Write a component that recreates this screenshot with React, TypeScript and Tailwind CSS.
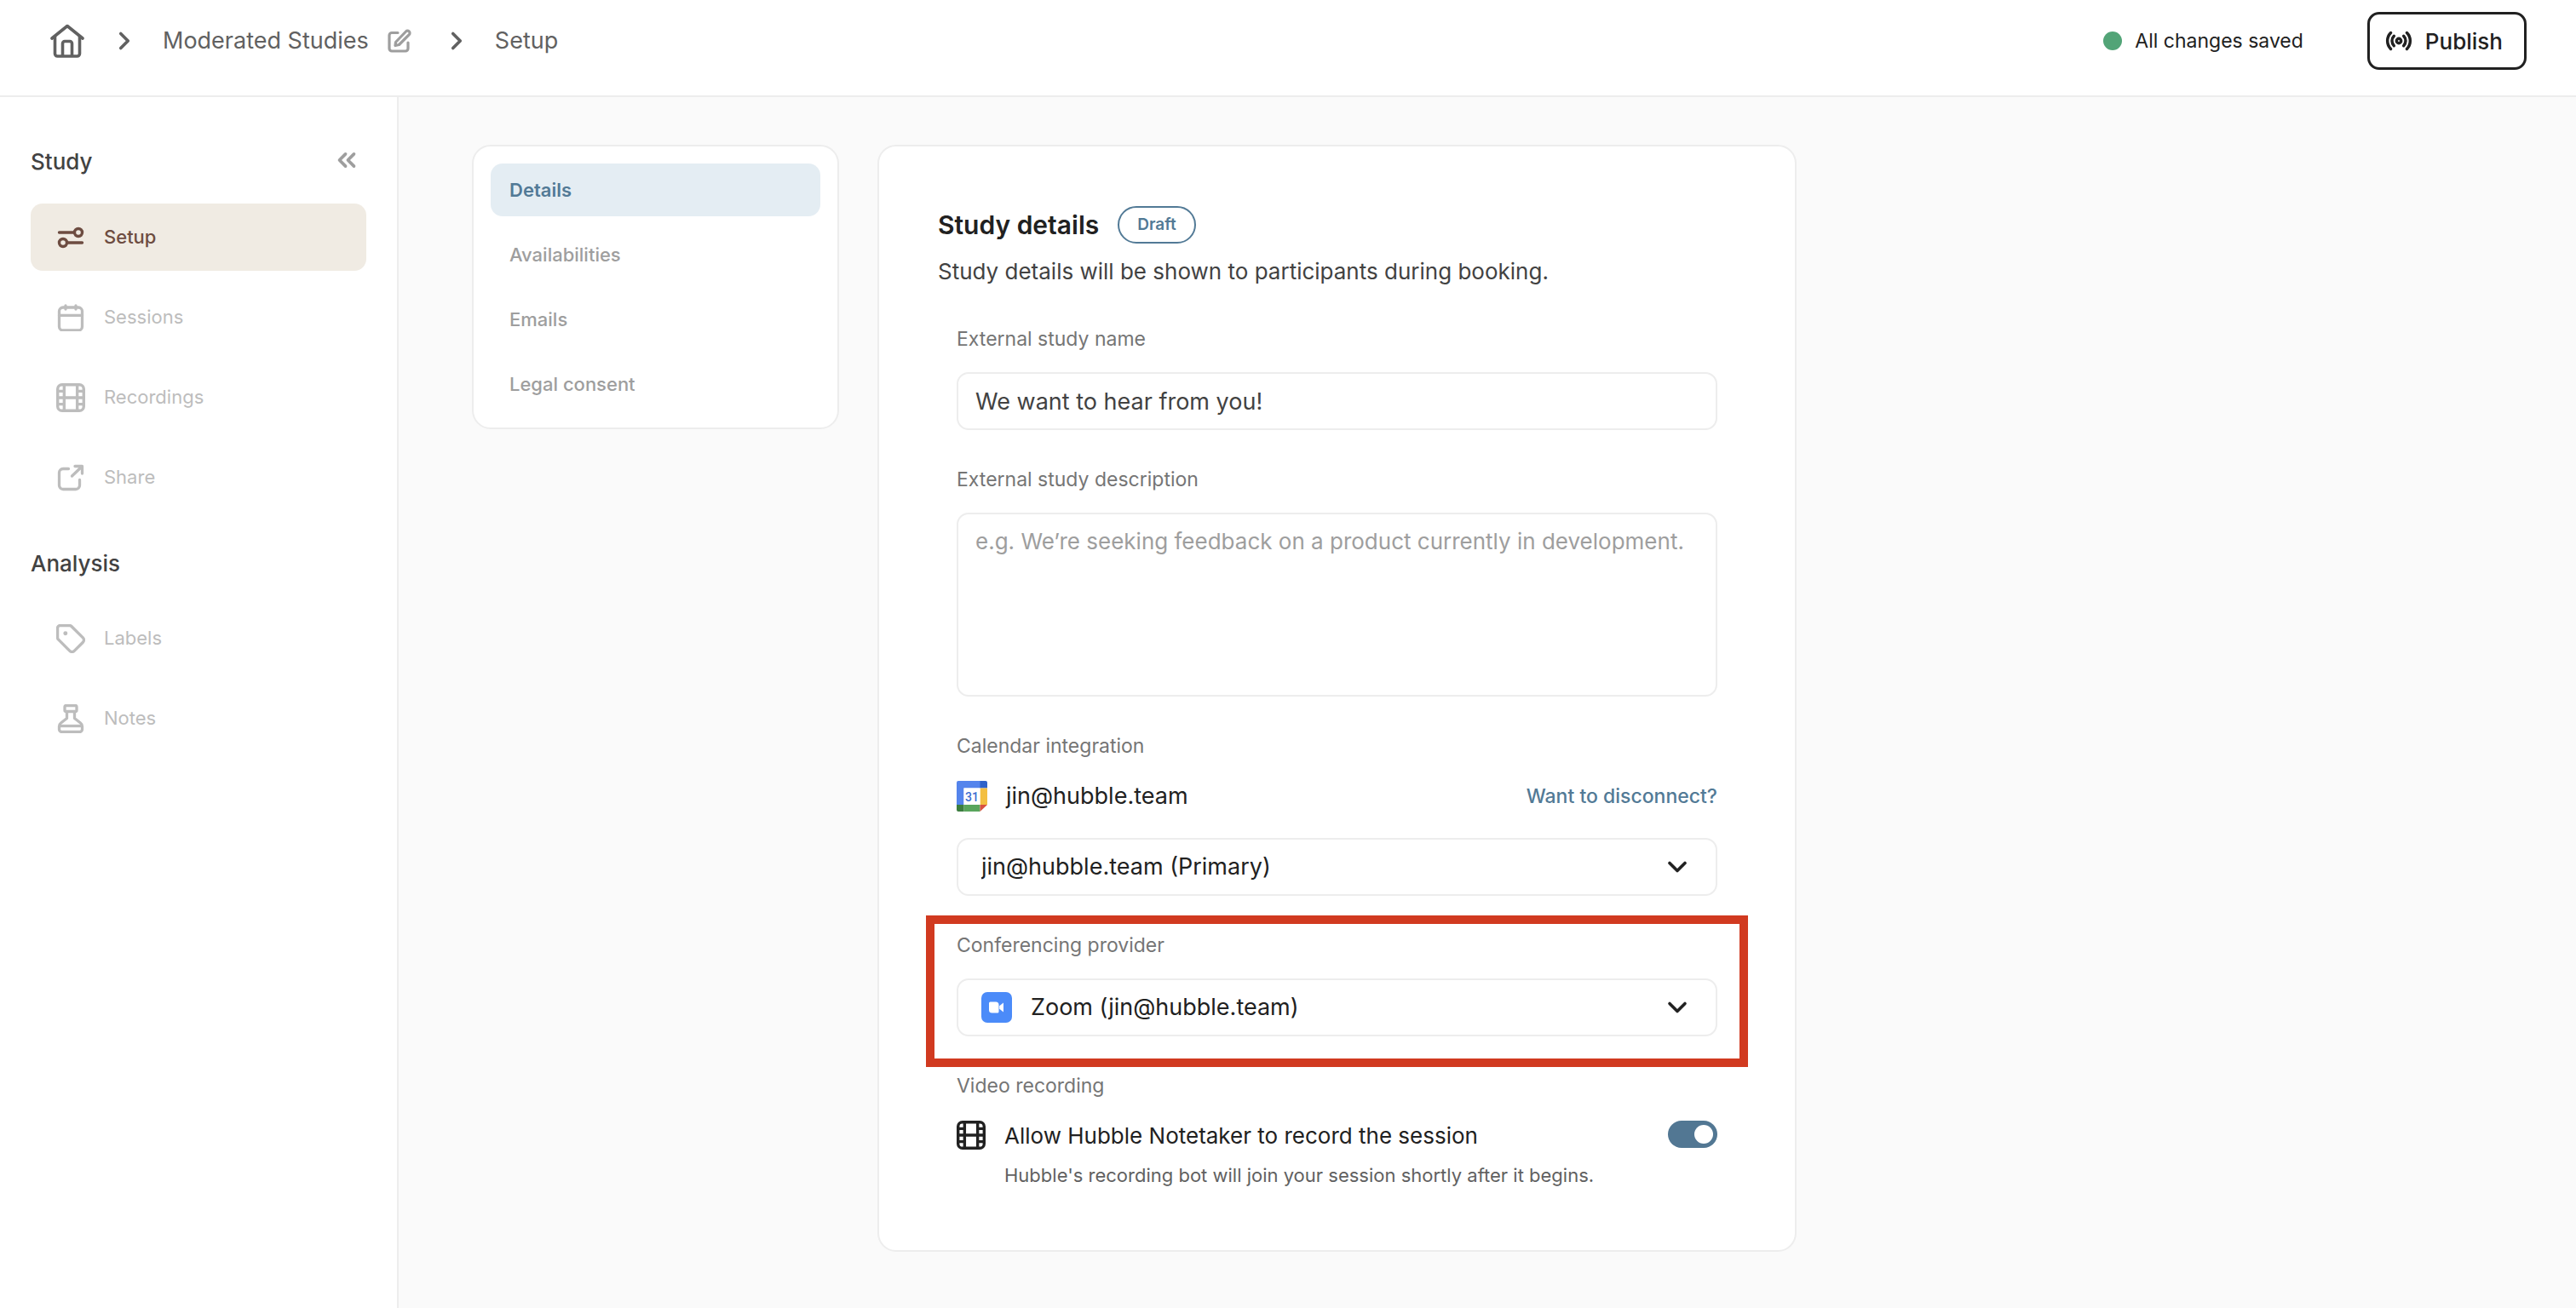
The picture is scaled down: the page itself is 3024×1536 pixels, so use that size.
import { useState } from 'react';
import type { ReactNode } from 'react';
import { ChevronDown, ChevronRight, ChevronsLeft, Radio } from 'lucide-react';

type IconProps = { className?: string };

const HomeIcon = ({ className }: IconProps) => (
  <svg viewBox="0 0 40 40" fill="none" stroke="currentColor" strokeWidth="3.6" strokeLinecap="round" strokeLinejoin="round" className={className}>
    <path d="M2 17 20 2.500 38 17" />
    <path d="M5.500 15v20a3 3 0 0 0 3 3h23a3 3 0 0 0 3-3V15" />
    <path d="M14.500 37V23a2.500 2.500 0 0 1 2.500-2.500h6a2.500 2.500 0 0 1 2.500 2.500v14" />
  </svg>
);

const EditIcon = ({ className }: IconProps) => (
  <svg viewBox="0 0 28 28" fill="none" stroke="currentColor" strokeWidth="3.2" strokeLinecap="round" strokeLinejoin="round" className={className}>
    <path d="M12 4.500H5A3 3 0 0 0 2 7.500V23a3 3 0 0 0 3 3h16a3 3 0 0 0 3-3v-7" />
    <path d="M9.500 15.500 21.500 3a2.600 2.600 0 0 1 3.800 3.600L13.500 18.500l-4.500 1z" />
  </svg>
);

const SlidersIcon = ({ className }: IconProps) => (
  <svg viewBox="0 0 32 32" fill="none" stroke="currentColor" strokeWidth="3.400" strokeLinecap="round" className={className}>
    <path d="M2.500 10H20M12 22h17.500" />
    <circle cx="25" cy="10" r="4.500" />
    <circle cx="7" cy="22" r="4.500" />
  </svg>
);

const CalendarIcon = ({ className }: IconProps) => (
  <svg viewBox="1.333 1.333 21.333 21.333" fill="none" stroke="currentColor" strokeWidth="2.200" strokeLinecap="round" strokeLinejoin="round" className={className}>
    <rect x="3" y="4" width="18" height="18" rx="3" />
    <path d="M3 10.200h18M8 2.600v2.800M16 2.600v2.800" />
  </svg>
);

const FilmIcon = ({ className }: IconProps) => (
  <svg viewBox="2 2 20 20" fill="none" stroke="currentColor" strokeWidth="2" className={className}>
    <rect x="3" y="3" width="18" height="18" rx="3" />
    <path d="M7.500 3v18M16.500 3v18M3 12h18M3 7.500h4.500M3 16.500h4.500M16.500 7.500H21M16.500 16.500H21" />
  </svg>
);

const ShareIcon = ({ className }: IconProps) => (
  <svg viewBox="0 0 32 32" fill="none" stroke="currentColor" strokeWidth="3.300" strokeLinecap="round" strokeLinejoin="round" className={className}>
    <path d="M13.500 5.500H7a4.500 4.500 0 0 0-4.500 4.500v15A4.500 4.500 0 0 0 7 29.500h15a4.500 4.500 0 0 0 4.500-4.500v-6.500" />
    <path d="M17.500 14 29 3M21 2.500h8.500V11" />
  </svg>
);

const TagIcon = ({ className }: IconProps) => (
  <svg viewBox="1 1 22 22" fill="none" stroke="currentColor" strokeWidth="2.200" strokeLinecap="round" strokeLinejoin="round" className={className}>
    <path d="M12.586 2.586A2 2 0 0 0 11.172 2H4a2 2 0 0 0-2 2v7.172a2 2 0 0 0 .586 1.414l8.704 8.704a2.426 2.426 0 0 0 3.420 0l6.580-6.580a2.426 2.426 0 0 0 0-3.420z" />
    <circle cx="8" cy="8" r="1.600" fill="currentColor" stroke="none" />
  </svg>
);

const FlaskIcon = ({ className }: IconProps) => (
  <svg viewBox="0 0 34 34" fill="none" stroke="currentColor" strokeWidth="3.300" strokeLinejoin="round" className={className}>
    <rect x="10" y="1.500" width="14" height="7" rx="1.500" />
    <path d="M12.500 8.500v8L5.500 22a5 5 0 0 0-2 4v3.500a3 3 0 0 0 3 3h21a3 3 0 0 0 3-3V26a5 5 0 0 0-2-4l-7-5.500v-8" />
    <path d="M3.500 25.500h27" />
  </svg>
);

const GoogleCalendarIcon = ({ className }: IconProps) => (
  <svg viewBox="0 0 36 36" className={className}>
    <path d="M2 0h26v8.500H8.500V28H0V2a2 2 0 0 1 2-2z" fill="#5484ec" />
    <path d="M27.500 0H34a2 2 0 0 1 2 2v6.500h-8.500z" fill="#2f62c9" />
    <path d="M27.500 8.500H36V28h-8.500z" fill="#f3bf42" />
    <path d="M8.500 28h19v8h-19z" fill="#58a55c" />
    <path d="M0 28h8.500v8H2a2 2 0 0 1-2-2z" fill="#3b7d3f" />
    <path d="M27.500 28H36l-8.500 8z" fill="#d85140" />
    <path d="M8.500 8.500h19V28h-19z" fill="#fff" />
    <text x="18" y="23.500" textAnchor="middle" fontSize="14" fill="#3c6dd0" fontWeight="500" fontFamily="Roboto, sans-serif">31</text>
  </svg>
);

const ZoomIcon = ({ className }: IconProps) => (
  <svg viewBox="0 0 36 36" className={className}>
    <rect width="36" height="36" rx="7" fill="#4b8bf9" />
    <path d="M9 13a1.500 1.500 0 0 1 1.500-1.500H17a3.500 3.500 0 0 1 3.500 3.500v8a1.500 1.500 0 0 1-1.500 1.500h-6.500A3.500 3.500 0 0 1 9 21z" fill="#fff" />
    <path d="m21.200 16.200 4.800-3.700v11l-4.800-3.700z" fill="#fff" />
  </svg>
);

type NavItem = { label: string; icon: ReactNode; active?: boolean };

const studyItems: NavItem[] = [
  { label: 'Setup', icon: <SlidersIcon className="size-8" />, active: true },
  { label: 'Sessions', icon: <CalendarIcon className="size-8" /> },
  { label: 'Recordings', icon: <FilmIcon className="size-[34px]" /> },
  { label: 'Share', icon: <ShareIcon className="size-8" /> },
];

const analysisItems: NavItem[] = [
  { label: 'Labels', icon: <TagIcon className="size-[34px]" /> },
  { label: 'Notes', icon: <FlaskIcon className="size-[34px]" /> },
];

const steps = ['Details', 'Availabilities', 'Emails', 'Legal consent'];

const NavList = ({ items }: { items: NavItem[] }) => (
  <ul className="flex flex-col gap-[15px]">
    {items.map((item) => (
      <li key={item.label}>
        <a
          href="#"
          className={`flex h-[79px] items-center gap-[22px] rounded-[14px] px-[30px] text-[22px] ${
            item.active ? 'bg-[#f0ebe3] font-medium text-[#6d4c41]' : 'text-[#bdbdbd]'
          }`}
        >
          <span className="flex w-[34px] justify-center">{item.icon}</span>
          {item.label}
        </a>
      </li>
    ))}
  </ul>
);

type SelectBoxProps = { id: string; value: string; icon?: ReactNode };

const SelectBox = ({ id, value, icon }: SelectBoxProps) => (
  <div className="flex h-[68px] items-center gap-[22px] rounded-[14px] border-2 border-[#ededed] px-[27px]">
    {icon}
    <select id={id} className="h-full min-w-0 flex-1 appearance-none bg-transparent text-[27px] text-[#212121] outline-none">
      <option>{value}</option>
    </select>
    <ChevronDown className="size-9 text-[#212121]" strokeWidth={2.4} />
  </div>
);

const labelClass = 'block text-[23px] leading-[30px] text-[#757575]';

export default function App() {
  const [name, setName] = useState('We want to hear from you!');
  const [description, setDescription] = useState('');
  const [record, setRecord] = useState(true);

  return (
    <div className="flex min-h-screen flex-col bg-white font-['Inter',sans-serif]">
      <header className="flex items-start justify-between border-b-2 border-[#ededed] pt-3.5 pr-[58px] pb-[30px] pl-[59px]">
        <nav className="flex h-[68px] items-center text-[27px] text-[#616161]">
          <a href="#" aria-label="Home">
            <HomeIcon className="size-10" />
          </a>
          <ChevronRight className="ml-[30px] size-[34px]" strokeWidth={2.6} />
          <a href="#" className="ml-[28px]">Moderated Studies</a>
          <button type="button" aria-label="Rename" className="ml-[22px] text-[#9e9e9e]">
            <EditIcon className="size-7" />
          </button>
          <ChevronRight className="ml-9 size-[34px]" strokeWidth={2.6} />
          <span className="ml-[28px]">Setup</span>
        </nav>

        <div className="flex items-center gap-[75px] text-[#212121]">
          <p className="flex items-center gap-[15px] text-[23px]">
            <span className="size-[22px] rounded-full bg-[#52a477]" />
            All changes saved
          </p>
          <button type="button" className="flex h-[68px] items-center gap-[15px] rounded-[14px] border-[3px] border-[#212121] pr-[25px] pl-[18px] text-[26px] font-medium">
            <Radio className="size-8" strokeWidth={2.6} />
            Publish
          </button>
        </div>
      </header>

      <div className="flex flex-1">
        <aside className="w-[468px] shrink-0 border-r-2 border-[#ededed] px-9 pt-[58px]">
          <div className="mb-[31px] flex h-9 items-center justify-between">
            <h2 className="text-[26px] leading-9 font-medium text-[#424242]">Study</h2>
            <button type="button" aria-label="Collapse sidebar" className="mr-[6px] mb-1 text-[#9e9e9e]">
              <ChevronsLeft className="size-[34px]" strokeWidth={2.6} />
            </button>
          </div>
          <NavList items={studyItems} />
          <h2 className="mt-[44px] mb-[30px] text-[26px] leading-9 font-medium text-[#424242]">Analysis</h2>
          <NavList items={analysisItems} />
        </aside>

        <main className="flex flex-1 items-start gap-[45px] bg-[#fafafa] px-[86px] pt-14 pb-16">
          <nav className="w-[431px] shrink-0 rounded-[22px] border-2 border-[#ededed] bg-white p-5">
            <ul className="flex flex-col gap-[14px]">
              {steps.map((step, i) => (
                <li key={step}>
                  <a
                    href="#"
                    className={`flex h-[62px] items-center rounded-[14px] px-[22px] text-[22px] ${
                      i === 0 ? 'bg-[#e4edf3] font-semibold text-[#527a96]' : 'font-medium text-[#9e9e9e]'
                    }`}
                  >
                    {step}
                  </a>
                </li>
              ))}
            </ul>
          </nav>

          <section className="max-w-[1079px] flex-1 rounded-[22px] border-2 border-[#ededed] bg-white px-[69px] pt-[70px] pb-[73px]">
            <div className="flex h-11 items-center gap-[22px]">
              <h1 className="text-[30px] leading-10 font-semibold text-[#212121]">Study details</h1>
              <span className="flex h-11 items-center rounded-full border-2 border-[#527a96] px-[21px] text-[19px] font-semibold text-[#527a96]">Draft</span>
            </div>
            <p className="mt-4 text-[26px] leading-[34px] text-[#424242]">
              Study details will be shown to participants during booking.
            </p>

            <form className="mt-[47px] flex flex-col gap-[43px] px-[22px]">
              <div>
                <label htmlFor="study-name" className={labelClass}>External study name</label>
                <input
                  id="study-name"
                  value={name}
                  onChange={(e) => setName(e.target.value)}
                  className="mt-6 block h-[68px] w-full rounded-[14px] border-2 border-[#ededed] px-5 text-[27px] text-[#424242] outline-none"
                />
              </div>

              <div>
                <label htmlFor="study-description" className={labelClass}>External study description</label>
                <textarea
                  id="study-description"
                  value={description}
                  onChange={(e) => setDescription(e.target.value)}
                  placeholder="e.g. We’re seeking feedback on a product currently in development."
                  className="mt-6 block h-[216px] w-full resize-none rounded-[14px] border-2 border-[#ededed] px-5 py-[15px] text-[26px] leading-[34px] text-[#424242] outline-none placeholder:text-[#9e9e9e]"
                />
              </div>

              <div>
                <label htmlFor="calendar" className={labelClass}>Calendar integration</label>
                <div className="mt-6 mb-[29px] flex h-10 items-center gap-[22px]">
                  <GoogleCalendarIcon className="size-9" />
                  <span className="text-[27px] text-[#212121]">jin@hubble.team</span>
                  <a href="#" className="ml-auto text-[23px] font-medium text-[#527a96]">Want to disconnect?</a>
                </div>
                <SelectBox id="calendar" value="jin@hubble.team (Primary)" />
              </div>

              <div className="relative">
                <label htmlFor="provider" className={`${labelClass} mb-6`}>Conferencing provider</label>
                <SelectBox id="provider" value="Zoom (jin@hubble.team)" icon={<ZoomIcon className="size-9" />} />
                <div className="pointer-events-none absolute -inset-x-9 -top-5 -bottom-9 border-[10px] border-[#d13a20]" />
              </div>

              <div>
                <p className={labelClass}>Video recording</p>
                <div className="mt-[26px] flex items-start gap-[22px]">
                  <FilmIcon className="size-[34px] text-[#212121]" />
                  <div>
                    <label htmlFor="record" className="block text-[26px] leading-9 text-[#212121]">Allow Hubble Notetaker to record the session</label>
                    <p className="mt-[13px] text-[22px] leading-[30px] text-[#616161]">
                      Hubble's recording bot will join your session shortly after it begins.
                    </p>
                  </div>
                  <input
                    id="record"
                    type="checkbox"
                    role="switch"
                    checked={record}
                    onChange={(e) => setRecord(e.target.checked)}
                    className="ml-auto flex h-8 w-[58px] shrink-0 appearance-none items-center rounded-full bg-[#bdbdbd] px-[5px] before:size-[22px] before:rounded-full before:bg-white checked:justify-end checked:bg-[#527793]"
                  />
                </div>
              </div>
            </form>
          </section>
        </main>
      </div>
    </div>
  );
}
